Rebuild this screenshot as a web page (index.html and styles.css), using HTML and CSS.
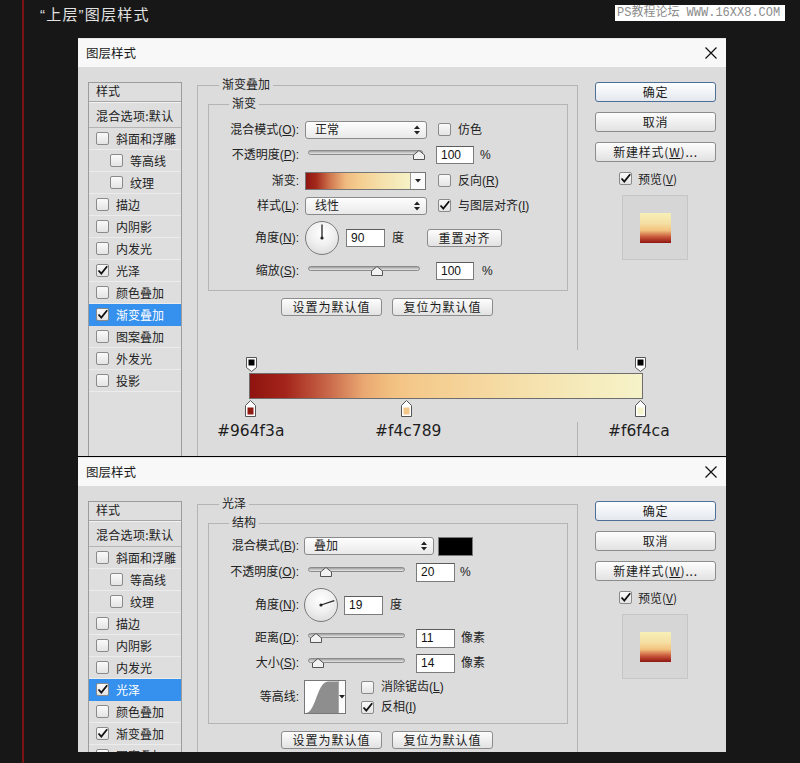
FILE: index.html
```html
<!DOCTYPE html>
<html lang="zh">
<head>
<meta charset="utf-8">
<title>图层样式</title>
<link rel="stylesheet" href="styles.css">
</head>
<body>
<div class="page">
  <div class="watermark">PS教程论坛 WWW.16XX8.COM</div>
  <div class="content">
    <h1 class="heading">“上层”图层样式</h1>

    <!-- Dialog 1 : 渐变叠加 -->
    <section class="dialog d1">
      <div class="titlebar">
        <span class="title">图层样式</span>
        <svg class="close" width="12" height="12" viewBox="0 0 12 12"><path d="M0.5 0.5 L11.5 11.5 M11.5 0.5 L0.5 11.5" stroke="#111" stroke-width="1.2"/></svg>
      </div>
      <div class="dbody">
        <div class="styles-list">
          <div class="sl-head">样式</div>
          <div class="sl-blend">混合选项:默认</div>
          <div class="sl-row"><span class="cb"></span>斜面和浮雕</div>
          <div class="sl-row sub"><span class="cb"></span>等高线</div>
          <div class="sl-row sub"><span class="cb"></span>纹理</div>
          <div class="sl-row"><span class="cb"></span>描边</div>
          <div class="sl-row"><span class="cb"></span>内阴影</div>
          <div class="sl-row"><span class="cb"></span>内发光</div>
          <div class="sl-row"><span class="cb"><svg viewBox="0 0 11 11"><path d="M1.5 5.5 L4.3 8.6 L10.2 1.2"/></svg></span>光泽</div>
          <div class="sl-row"><span class="cb"></span>颜色叠加</div>
          <div class="sl-row sel"><span class="cb"><svg viewBox="0 0 11 11"><path d="M1.5 5.5 L4.3 8.6 L10.2 1.2"/></svg></span>渐变叠加</div>
          <div class="sl-row"><span class="cb"></span>图案叠加</div>
          <div class="sl-row"><span class="cb"></span>外发光</div>
          <div class="sl-row"><span class="cb"></span>投影</div>
        </div>

        <div class="main">
          <div class="group outer">
            <div class="group-title">渐变叠加</div>
            <div class="group inner in1">
              <div class="group-title t-inner">渐变</div>
              <div class="rows rows1">
                <div class="row h25">
                  <span class="lbl">混合模式(<u>O</u>):</span>
                  <div class="select w122"><span>正常</span><svg class="arrows" width="6" height="10" viewBox="0 0 6 10"><path d="M0 4 L3 0.5 L6 4 Z M0 6 L3 9.5 L6 6 Z" fill="#222"/></svg></div>
                  <span class="cb ml11"></span><span class="cbt">仿色</span>
                </div>
                <div class="row h26">
                  <span class="lbl">不透明度(<u>P</u>):</span>
                  <div class="slider w122"><div class="track"></div><svg class="thumb" style="left:114px" width="12" height="10" viewBox="0 0 12 10"><path d="M0.5 9.5 V5 L6 0.5 L11.5 5 V9.5 Z" fill="#f2f2f2" stroke="#555"/></svg></div>
                  <span class="num ml9">100</span><span class="unit ml6">%</span>
                </div>
                <div class="row h25">
                  <span class="lbl">渐变:</span>
                  <div class="gswatch"><div class="gfill"></div><div class="gdrop"><svg width="6" height="4" viewBox="0 0 6 4"><path d="M0 0 H6 L3 3.5 Z" fill="#222"/></svg></div></div>
                  <span class="cb ml12"></span><span class="cbt">反向(<u>R</u>)</span>
                </div>
                <div class="row h25">
                  <span class="lbl">样式(<u>L</u>):</span>
                  <div class="select w122"><span>线性</span><svg class="arrows" width="6" height="10" viewBox="0 0 6 10"><path d="M0 4 L3 0.5 L6 4 Z M0 6 L3 9.5 L6 6 Z" fill="#222"/></svg></div>
                  <span class="cb ml11"><svg viewBox="0 0 11 11"><path d="M1.5 5.5 L4.3 8.6 L10.2 1.2"/></svg></span><span class="cbt">与图层对齐(<u>I</u>)</span>
                </div>
                <div class="row h40">
                  <span class="lbl">角度(<u>N</u>):</span>
                  <div class="dial"><svg width="32" height="32" viewBox="0 0 32 32"><path d="M16 16 L16 2.5" stroke="#222" stroke-width="1.3"/><circle cx="16" cy="16" r="1.6" fill="#222"/></svg></div>
                  <span class="num ml7 w39">90</span><span class="unit ml7">度</span>
                  <div class="btn reset">重置对齐</div>
                </div>
                <div class="row h26">
                  <span class="lbl">缩放(<u>S</u>):</span>
                  <div class="slider w122"><div class="track short"></div><svg class="thumb" style="left:72px" width="12" height="10" viewBox="0 0 12 10"><path d="M0.5 9.5 V5 L6 0.5 L11.5 5 V9.5 Z" fill="#f2f2f2" stroke="#555"/></svg></div>
                  <span class="num ml9">100</span><span class="unit ml8">%</span>
                </div>
              </div>
            </div>
            <div class="defaults">
              <div class="btn dbtn">设置为默认值</div>
              <div class="btn dbtn">复位为默认值</div>
            </div>
          </div>
        </div>

        <div class="side">
          <div class="btn big default">确定</div>
          <div class="btn big">取消</div>
          <div class="btn big">新建样式(<u>W</u>)...</div>
          <div class="pv-check"><span class="cb"><svg viewBox="0 0 11 11"><path d="M1.5 5.5 L4.3 8.6 L10.2 1.2"/></svg></span><span class="cbt">预览(<u>V</u>)</span></div>
          <div class="preview"><div class="pv-swatch"></div></div>
        </div>

        <div class="grad-editor">
          <svg class="stop" style="left:42px;top:7px" width="11" height="15" viewBox="0 0 11 15"><path d="M0.5 0.5 H10.5 V10.5 L5.5 14.5 L0.5 10.5 Z" fill="#fff" stroke="#555"/><rect x="2.5" y="2.5" width="6" height="6" fill="#000"/></svg>
          <svg class="stop" style="left:431px;top:7px" width="11" height="15" viewBox="0 0 11 15"><path d="M0.5 0.5 H10.5 V10.5 L5.5 14.5 L0.5 10.5 Z" fill="#fff" stroke="#555"/><rect x="2.5" y="2.5" width="6" height="6" fill="#000"/></svg>
          <div class="gbar"></div>
          <svg class="stop" style="left:41px;top:50px" width="11" height="17" viewBox="0 0 11 17"><path d="M0.5 5.5 L5.5 0.5 L10.5 5.5 V16.5 H0.5 Z" fill="#fff" stroke="#555"/><rect x="2.5" y="7.5" width="6" height="7" fill="#8f1a12"/></svg>
          <svg class="stop" style="left:197px;top:50px" width="11" height="17" viewBox="0 0 11 17"><path d="M0.5 5.5 L5.5 0.5 L10.5 5.5 V16.5 H0.5 Z" fill="#fff" stroke="#555"/><rect x="2.5" y="7.5" width="6" height="7" fill="#f4c789"/></svg>
          <svg class="stop" style="left:431px;top:50px" width="11" height="17" viewBox="0 0 11 17"><path d="M0.5 5.5 L5.5 0.5 L10.5 5.5 V16.5 H0.5 Z" fill="#fff" stroke="#555"/><rect x="2.5" y="7.5" width="6" height="7" fill="#f6f4ca"/></svg>
          <span class="hex" style="left:13px">#964f3a</span>
          <span class="hex" style="left:171px">#f4c789</span>
          <span class="hex" style="left:404px">#f6f4ca</span>
        </div>
      </div>
    </section>

    <!-- Dialog 2 : 光泽 -->
    <section class="dialog d2">
      <div class="titlebar">
        <span class="title">图层样式</span>
        <svg class="close" width="12" height="12" viewBox="0 0 12 12"><path d="M0.5 0.5 L11.5 11.5 M11.5 0.5 L0.5 11.5" stroke="#111" stroke-width="1.2"/></svg>
      </div>
      <div class="dbody">
        <div class="styles-list">
          <div class="sl-head">样式</div>
          <div class="sl-blend">混合选项:默认</div>
          <div class="sl-row"><span class="cb"></span>斜面和浮雕</div>
          <div class="sl-row sub"><span class="cb"></span>等高线</div>
          <div class="sl-row sub"><span class="cb"></span>纹理</div>
          <div class="sl-row"><span class="cb"></span>描边</div>
          <div class="sl-row"><span class="cb"></span>内阴影</div>
          <div class="sl-row"><span class="cb"></span>内发光</div>
          <div class="sl-row sel"><span class="cb"><svg viewBox="0 0 11 11"><path d="M1.5 5.5 L4.3 8.6 L10.2 1.2"/></svg></span>光泽</div>
          <div class="sl-row"><span class="cb"></span>颜色叠加</div>
          <div class="sl-row"><span class="cb"><svg viewBox="0 0 11 11"><path d="M1.5 5.5 L4.3 8.6 L10.2 1.2"/></svg></span>渐变叠加</div>
          <div class="sl-row"><span class="cb"></span>图案叠加</div>
          <div class="sl-row"><span class="cb"></span>外发光</div>
          <div class="sl-row"><span class="cb"></span>投影</div>
        </div>

        <div class="main">
          <div class="group outer">
            <div class="group-title">光泽</div>
            <div class="group inner in2">
              <div class="group-title t-inner">结构</div>
              <div class="rows rows2">
                <div class="row h26">
                  <span class="lbl l2">混合模式(<u>B</u>):</span>
                  <div class="select w130"><span>叠加</span><svg class="arrows" width="6" height="10" viewBox="0 0 6 10"><path d="M0 4 L3 0.5 L6 4 Z M0 6 L3 9.5 L6 6 Z" fill="#222"/></svg></div>
                  <span class="black-swatch"></span>
                </div>
                <div class="row h26">
                  <span class="lbl l2">不透明度(<u>O</u>):</span>
                  <div class="slider w101"><div class="track full"></div><svg class="thumb" style="left:22px" width="12" height="10" viewBox="0 0 12 10"><path d="M0.5 9.5 V5 L6 0.5 L11.5 5 V9.5 Z" fill="#f2f2f2" stroke="#555"/></svg></div>
                  <span class="num ml11 w39 h19">20</span><span class="unit ml5">%</span>
                </div>
                <div class="row h40">
                  <span class="lbl l2">角度(<u>N</u>):</span>
                  <div class="dial"><svg width="32" height="32" viewBox="0 0 32 32"><path d="M16 16 L29.3 11.6" stroke="#222" stroke-width="1.3"/><circle cx="16" cy="16" r="1.6" fill="#222"/></svg></div>
                  <span class="num ml6 w39 h19">19</span><span class="unit ml7">度</span>
                </div>
                <div class="row h26">
                  <span class="lbl l2">距离(<u>D</u>):</span>
                  <div class="slider w101"><div class="track full"></div><svg class="thumb" style="left:12px" width="12" height="10" viewBox="0 0 12 10"><path d="M0.5 9.5 V5 L6 0.5 L11.5 5 V9.5 Z" fill="#f2f2f2" stroke="#555"/></svg></div>
                  <span class="num ml11 w39 h19">11</span><span class="unit ml6">像素</span>
                </div>
                <div class="row h24">
                  <span class="lbl l2">大小(<u>S</u>):</span>
                  <div class="slider w101"><div class="track full"></div><svg class="thumb" style="left:14px" width="12" height="10" viewBox="0 0 12 10"><path d="M0.5 9.5 V5 L6 0.5 L11.5 5 V9.5 Z" fill="#f2f2f2" stroke="#555"/></svg></div>
                  <span class="num ml11 w39 h19">14</span><span class="unit ml6">像素</span>
                </div>
                <div class="row h44">
                  <span class="lbl l2">等高线:</span>
                  <div class="contour">
                    <svg class="curve" width="33" height="32" viewBox="0 0 33 32"><path d="M1 32 C 11 31, 12 1, 23 0.5 L33 0.5 L33 32 Z" fill="#8e8e8e"/></svg>
                    <div class="cdrop"><svg width="6" height="4" viewBox="0 0 6 4"><path d="M0 0 H6 L3 3.5 Z" fill="#222"/></svg></div>
                  </div>
                  <div class="checks">
                    <div class="chk"><span class="cb"></span><span class="cbt">消除锯齿(<u>L</u>)</span></div>
                    <div class="chk"><span class="cb"><svg viewBox="0 0 11 11"><path d="M1.5 5.5 L4.3 8.6 L10.2 1.2"/></svg></span><span class="cbt">反相(<u>I</u>)</span></div>
                  </div>
                </div>
              </div>
            </div>
            <div class="defaults">
              <div class="btn dbtn">设置为默认值</div>
              <div class="btn dbtn">复位为默认值</div>
            </div>
          </div>
        </div>

        <div class="side">
          <div class="btn big default">确定</div>
          <div class="btn big">取消</div>
          <div class="btn big">新建样式(<u>W</u>)...</div>
          <div class="pv-check"><span class="cb"><svg viewBox="0 0 11 11"><path d="M1.5 5.5 L4.3 8.6 L10.2 1.2"/></svg></span><span class="cbt">预览(<u>V</u>)</span></div>
          <div class="preview"><div class="pv-swatch"></div></div>
        </div>
      </div>
    </section>
  </div>
</div>
</body>
</html>
```

FILE: styles.css
```css
* { box-sizing: border-box; }
html, body { margin: 0; padding: 0; }
body {
  background: #171717;
  font-family: "Liberation Sans", "Noto Sans CJK SC", sans-serif;
}
u { text-decoration: underline; text-underline-offset: 1px; }

.page {
  position: relative;
  width: 800px;
  height: 763px;
  overflow: hidden;
}
.content {
  margin-left: 22px;
  border-left: 2px solid #7a1414;
  height: 763px;
}
.heading {
  margin: 0;
  height: 38px;
  padding-left: 16px;
  font: normal 15px/30px "Liberation Sans", "Noto Sans CJK SC", sans-serif;
  letter-spacing: 1.2px;
  color: #e2e2e2;
}
.watermark {
  position: absolute;
  left: 615px;
  top: 5px;
  width: 170px;
  height: 16px;
  background: #fff;
  color: #8c8c8c;
  font: 12px/16px "Liberation Mono", "Noto Sans CJK SC", monospace;
  padding-left: 2px;
  white-space: nowrap;
}

/* dialog */
.dialog {
  margin-left: 54px;
  width: 648px;
  overflow: hidden;
  background: #dcdcdc;
}
.d1 { height: 418px; }
.d2 { height: 296px; border-top: 1px solid #000; }
.titlebar {
  display: flex;
  align-items: center;
  height: 29px;
  padding: 0 8px;
  background: #f8f8f8;
  border-top: 1px solid #e6e6e6;
}
.title {
  font: 12.5px/16px "Noto Sans CJK SC", sans-serif;
  color: #1a1a1a;
}
.close { margin-left: auto; margin-right: 1px; }

.dbody {
  position: relative;
  display: flex;
  align-items: flex-start;
  padding: 15px 10px 0;
  font-size: 12px;
  color: #222;
}

/* styles list */
.styles-list {
  width: 94px;
  height: 420px;
  flex: none;
  border: 1px solid #9c9c9c;
  background: #dedede;
  font: 12px/16px "Noto Sans CJK SC", sans-serif;
  color: #222;
}
.sl-head {
  height: 19px;
  padding: 0 0 0 7px;
  line-height: 16px;
  border-bottom: 1px solid #a6a6a6;
}
.sl-blend {
  height: 26px;
  padding: 4px 0 0 7px;
  line-height: 18px;
  border-top: 1px solid #f2f2f2;
  border-bottom: 1px solid #b4b4b4;
  white-space: nowrap;
  letter-spacing: 0.3px;
}
.sl-row {
  display: flex;
  align-items: center;
  height: 22px;
  padding-left: 7px;
  border-bottom: 1px solid #ececec;
  white-space: nowrap;
}
.sl-row .cb { margin-right: 7px; }
.sl-row.sub { padding-left: 21px; }
.sl-row.sel { background: #3590ee; color: #fff; border-bottom-color: #3590ee; }

/* checkbox */
.cb {
  display: inline-flex;
  flex: none;
  width: 13px;
  height: 13px;
  border: 1px solid #8a8a8a;
  border-radius: 2px;
  background: linear-gradient(#fafafa, #e4e4e4);
}
.cb svg { width: 11px; height: 11px; overflow: visible; }
.cb svg path { fill: none; stroke: #111; stroke-width: 1.8; }
.cbt { margin-left: 7px; white-space: nowrap; }

/* main column */
.main {
  width: 381px;
  flex: none;
  margin-left: 15px;
  margin-top: 3px;
}
.group { border: 1px solid #b4b4b4; }
.outer { height: 420px; }
.group-title {
  display: block;
  width: max-content;
  height: 16px;
  margin: -10px 0 0 21px;
  padding: 0 3px;
  line-height: 16px;
  background: #dcdcdc;
  font-family: "Noto Sans CJK SC", sans-serif;
  font-size: 12px;
  color: #222;
}
.group-title.t-inner { margin-left: 20px; }
.inner { margin: 12px 9px 0 10px; }
.in1 { padding-bottom: 6px; }
.in2 { padding-bottom: 4px; }
.rows1 { margin-top: 6px; }
.rows2 { margin-top: 3px; }

.row {
  display: flex;
  align-items: center;
  font-family: "Liberation Sans", "Noto Sans CJK SC", sans-serif;
  font-size: 12px;
  line-height: 16px;
  color: #222;
}
.h24 { height: 24px; }
.h25 { height: 25px; }
.h26 { height: 26px; }
.h40 { height: 40px; }
.h44 { height: 44px; }
.lbl {
  width: 90px;
  margin-right: 6px;
  text-align: right;
  white-space: nowrap;
}
.lbl.l2 { margin-right: 5px; }

.ml5 { margin-left: 5px; }
.ml6 { margin-left: 6px; }
.ml7 { margin-left: 7px; }
.ml8 { margin-left: 8px; }
.ml9 { margin-left: 9px; }
.ml11 { margin-left: 11px; }
.ml12 { margin-left: 12px; }

.select {
  display: flex;
  align-items: center;
  height: 18px;
  padding: 0 6px 0 9px;
  border: 1px solid #8a8a8a;
  border-radius: 3px;
  background: linear-gradient(#fefefe, #e9e9e9);
}
.select .arrows { margin-left: auto; }
.w122 { width: 122px; }
.w130 { width: 130px; }
.w101 { width: 101px; }

.num {
  width: 38px;
  height: 18px;
  padding-left: 4px;
  border: 1px solid #7c7c7c;
  border-top-color: #5c5c5c;
  background: #fff;
  font: 12px/16px "Liberation Sans", sans-serif;
  color: #111;
}
.num.w39 { width: 39px; }
.num.h19 { height: 19px; line-height: 17px; }
.unit { white-space: nowrap; }

.slider { position: relative; height: 18px; flex: none; }
.track {
  position: absolute;
  left: 3px;
  right: 4px;
  top: 4px;
  height: 5px;
  border: 1px solid #8b8b8b;
  border-radius: 3px;
  background: linear-gradient(#a0a0a0, #e8e8e8);
}
.track.short { right: 7px; }
.track.full { left: 4px; right: 0; }
.thumb { position: absolute; top: 4px; margin-left: -6px; }

.gswatch {
  display: flex;
  width: 121px;
  height: 18px;
  border: 1px solid #777;
}
.gfill {
  flex: 1;
  background: linear-gradient(90deg, #8f1410 0%, #a52a1c 10%, #d27b52 24%, #efba80 38%, #f4cc8e 50%, #f5e0aa 72%, #f6f2c6 100%);
}
.gdrop {
  display: flex;
  align-items: center;
  justify-content: center;
  width: 15px;
  border-left: 1px solid #9a9a9a;
  background: #fbfbfb;
}

.dial {
  display: flex;
  width: 34px;
  height: 34px;
  flex: none;
  border: 1px solid #7a7a7a;
  border-radius: 50%;
  background: radial-gradient(circle at 50% 35%, #ffffff 0%, #f0f0f0 45%, #d4d4d4 100%);
}

.btn {
  height: 18px;
  border: 1px solid #8c8c8c;
  border-radius: 3px;
  background: linear-gradient(#fdfdfd, #e2e2e2);
  font: 12px/16px "Noto Sans CJK SC", sans-serif;
  color: #1a1a1a;
  text-align: center;
  white-space: nowrap;
}
.btn.reset { width: 75px; margin-left: 23px; letter-spacing: 1px; }
.defaults {
  display: flex;
  justify-content: center;
  gap: 10px;
  margin-top: 7px;
  padding-right: 1px;
}
.dbtn { width: 101px; letter-spacing: 1px; }

.black-swatch {
  width: 35px;
  height: 19px;
  margin-left: 4px;
  border: 1px solid #7a7a7a;
  background: #000;
}

.contour {
  display: flex;
  width: 42px;
  height: 34px;
  border: 1px solid #777;
  background: #fff;
}
.curve { display: block; }
.cdrop {
  display: flex;
  align-items: center;
  justify-content: center;
  width: 7px;
  border-left: 1px solid #aaa;
  background: #fbfbfb;
}
.checks { margin-left: 15px; display: flex; flex-direction: column; }
.chk { display: flex; align-items: center; height: 20px; }

/* right column */
.side {
  width: 121px;
  flex: none;
  margin-left: 17px;
}
.btn.big {
  height: 20px;
  line-height: 18px;
  margin-bottom: 10px;
  letter-spacing: 0.8px;
}
.btn.default {
  border-color: #4d6f98;
  background: linear-gradient(#fdfeff, #e4e8ee);
}
.pv-check {
  display: flex;
  align-items: center;
  height: 13px;
  padding-left: 24px;
  font: 12px/16px "Noto Sans CJK SC", sans-serif;
  color: #222;
}
.pv-check .cbt { margin-left: 6px; }
.preview {
  display: flex;
  align-items: center;
  justify-content: center;
  width: 66px;
  height: 65px;
  margin: 10px 0 0 27px;
  border: 1px solid #c6c6c6;
  background: #d6d6d6;
}
.pv-swatch {
  width: 31px;
  height: 30px;
  background: linear-gradient(#f7f0b8 0%, #f5dfa2 35%, #f2c27e 58%, #c8553a 80%, #8e1611 100%);
}

/* gradient editor overlay */
.grad-editor {
  position: absolute;
  left: 126px;
  top: 283px;
  width: 500px;
  height: 92px;
  background: linear-gradient(#dcdcdc, #dcdcdc) no-repeat;
  background-size: 100% 72px;
}
.gbar {
  position: absolute;
  left: 45px;
  top: 23px;
  width: 394px;
  height: 26px;
  border: 1px solid #6e6e6e;
  background: linear-gradient(90deg, #8f1410 0%, #a3241a 9%, #c9684a 20%, #eaa872 29%, #f2c080 36%, #f4c789 40%, #f5d49a 55%, #f5e6b4 78%, #f6f3c9 100%);
}
.stop { position: absolute; }
.hex {
  position: absolute;
  top: 72px;
  font: 15.5px/18px "DejaVu Sans", sans-serif;
  color: #1e1e1e;
  white-space: nowrap;
}
```
